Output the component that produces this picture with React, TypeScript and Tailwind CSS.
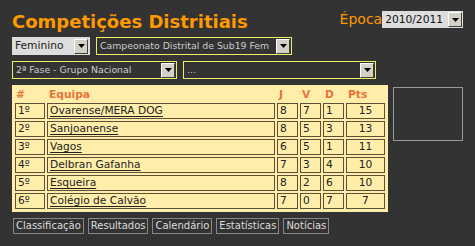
import React from "react";

const standings = [
  { pos: "1º", team: "Ovarense/MERA DOG", j: 8, v: 7, d: 1, pts: 15 },
  { pos: "2º", team: "Sanjoanense", j: 8, v: 5, d: 3, pts: 13 },
  { pos: "3º", team: "Vagos", j: 6, v: 5, d: 1, pts: 11 },
  { pos: "4º", team: "Delbran Gafanha", j: 7, v: 3, d: 4, pts: 10 },
  { pos: "5º", team: "Esqueira", j: 8, v: 2, d: 6, pts: 10 },
  { pos: "6º", team: "Colégio de Calvão", j: 7, v: 0, d: 7, pts: 7 },
];

const tabs = ["Classificação", "Resultados", "Calendário", "Estatísticas", "Notícias"];

function DropArrow() {
  return (
    <span className="flex h-[15px] w-[14px] shrink-0 items-center justify-center border border-b-[#404040] border-l-[#ffffff] border-r-[#404040] border-t-[#ffffff] bg-[#d4d0c8]">
      <svg width="7" height="4" viewBox="0 0 7 4">
        <path d="M0 0h7L3.5 4z" fill="#000" />
      </svg>
    </span>
  );
}

function YellowSelect({ label, width }: { label: string; width: string }) {
  return (
    <div className={`flex h-[18px] items-center justify-between border border-[#eeee66] pl-[3px] pr-[1px] text-[9.33px] text-[#cccccc] ${width}`}>
      <span>{label}</span>
      <DropArrow />
    </div>
  );
}

export default function App() {
  return (
    <div className="h-[246px] w-[475px] bg-[#333333] px-3 font-['DejaVu_Sans',Verdana,sans-serif] text-[10.67px]">
      <div className="flex items-start justify-between pt-[11px]">
        <h1 className="text-[18px] font-bold leading-[22px] text-[#ff9900]">Competições Distritiais</h1>
        <div className="flex items-center">
          <span className="text-[14px] leading-[17px] text-[#ff9900]">Época</span>
          <div className="flex h-[17px] items-center bg-[#dddddd] pl-[3px] pr-[1px] text-[10.67px] text-[#111111]">
            <span className="pr-[5px]">2010/2011</span>
            <DropArrow />
          </div>
        </div>
      </div>

      <div className="mt-[4px] flex items-center gap-[6px]">
        <div className="flex h-[18px] items-center bg-[#dddddd] pl-[3px] pr-[2px] text-[#222222]">
          <span className="w-[59px]">Feminino</span>
          <DropArrow />
        </div>
        <YellowSelect label="Campeonato Distrital de Sub19 Fem" width="w-[196px]" />
      </div>

      <div className="mt-[6px] flex items-center gap-[6px]">
        <YellowSelect label="2ª Fase - Grupo Nacional" width="w-[165px]" />
        <YellowSelect label="..." width="w-[193px]" />
      </div>

      <div className="mt-[6px] flex items-start gap-[5px]">
        <div className="w-[376px] bg-[#ffeeaa] px-[1px] pb-[1px] pt-[1px]">
          <table className="w-full border-separate border-spacing-[2px] text-[#222222]">
            <thead>
              <tr className="text-left font-bold text-[#e8743a]">
                <th className="h-[13px] w-[30px] pl-[1px] leading-[13px]">#</th>
                <th className="pl-[2px] leading-[13px]">Equipa</th>
                <th className="w-[21px] pl-[2px] leading-[13px]">J</th>
                <th className="w-[21px] pl-[2px] leading-[13px]">V</th>
                <th className="w-[21px] pl-[2px] leading-[13px]">D</th>
                <th className="w-[39px] pl-[2px] leading-[13px]">Pts</th>
              </tr>
            </thead>
            <tbody>
              {standings.map((row) => (
                <tr key={row.pos} className="leading-[14px]">
                  <td className="h-[16px] border border-[#5e5038] pl-[2px]">{row.pos}</td>
                  <td className="border border-[#5e5038] pl-[2px]">
                    <span className="underline underline-offset-[2px]">{row.team}</span>
                  </td>
                  <td className="border border-[#5e5038] pl-[2px]">{row.j}</td>
                  <td className="border border-[#5e5038] pl-[2px]">{row.v}</td>
                  <td className="border border-[#5e5038] pl-[2px]">{row.d}</td>
                  <td className="border border-[#5e5038] text-center">{row.pts}</td>
                </tr>
              ))}
            </tbody>
          </table>
        </div>
        <div className="mt-[2px] h-[54px] w-[70px] border border-[#999999]" />
      </div>

      <div className="ml-[1px] mt-[6px] flex gap-[4px]">
        {tabs.map((tab) => (
          <span key={tab} className="border border-[#888888] px-[2px] text-[10px] leading-[14px] text-[#dddddd]">
            {tab}
          </span>
        ))}
      </div>
    </div>
  );
}
